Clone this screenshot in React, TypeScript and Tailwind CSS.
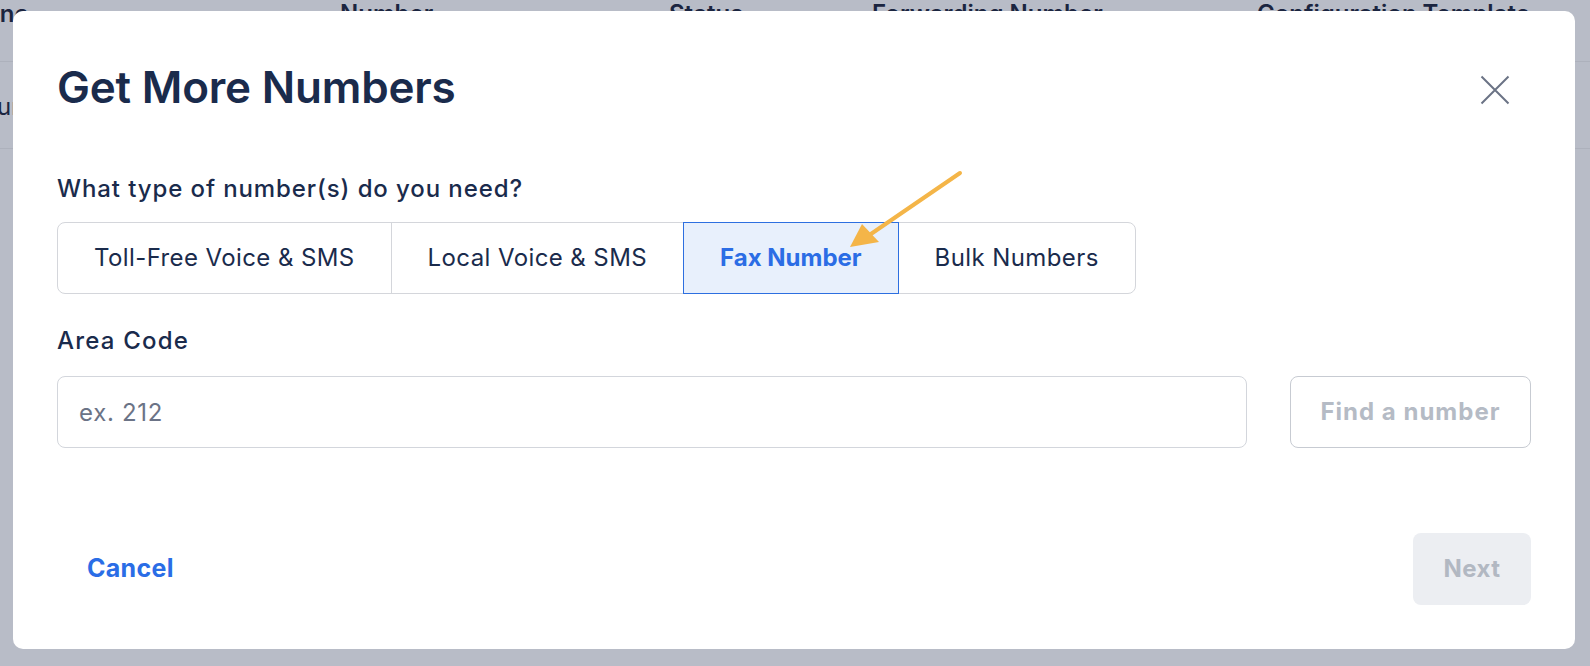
import React, { useState } from 'react';

const numberTypes = ['Toll-Free Voice & SMS', 'Local Voice & SMS', 'Fax Number', 'Bulk Numbers'];

const Backdrop: React.FC = () => (
  <div className="text-[24px] text-[#1b2540]">
    {/* table header, mostly hidden under the modal */}
    <div className="flex h-[62px] items-start border-b border-[#adb1bc] font-semibold leading-[32px]">
      <div className="-mt-[2px] w-[340px]">
        <span className="-ml-[30px] block">Sync</span>
      </div>
      <div className="-mt-[2px] w-[329px]">Number</div>
      <div className="-mt-[2px] w-[203px]">Status</div>
      <div className="-mt-[2px] w-[385px]">Forwarding Number</div>
      <div className="-mt-[2px] whitespace-nowrap">Configuration Template</div>
    </div>
    <div className="flex h-[87px] items-center border-b border-[#adb1bc]">
      <div className="-ml-[31px] pt-[4px]">Tour</div>
    </div>
  </div>
);

const Arrow: React.FC = () => (
  <svg className="pointer-events-none absolute left-0 top-0 z-20" width="1590" height="666" viewBox="0 0 1590 666">
    <line x1="960" y1="173" x2="868" y2="236" stroke="#f4b548" strokeWidth="4" strokeLinecap="round" />
    <polygon points="850,247 862,224 879,242" fill="#f4b548" />
  </svg>
);

export default function App() {
  const [active, setActive] = useState('Fax Number');
  const [areaCode, setAreaCode] = useState('');

  return (
    <div className="relative h-[666px] w-full overflow-hidden bg-[#b8bcc7] font-['Inter','Liberation_Sans',sans-serif]">
      <Backdrop />

      {/* Modal */}
      <div className="absolute left-[13px] top-[11px] flex h-[638px] w-[1562px] flex-col rounded-[10px] bg-white px-[44px] pt-[50px]">
        <div className="flex items-start justify-between">
          <h1 className="text-[44px] font-semibold leading-[52px] tracking-[-0.2px] text-[#1a2b4c]">Get More Numbers</h1>
          <button className="mt-[3px] flex h-[52px] w-[72px] items-center justify-center text-[#6b7385]">
            <svg width="30" height="30" viewBox="0 0 30 30" fill="none" stroke="currentColor" strokeWidth="2">
              <path d="M1.5 1.5 L28.5 28.5 M28.5 1.5 L1.5 28.5" />
            </svg>
          </button>
        </div>

        <p className="mt-[57px] text-[24px] font-medium leading-[32px] tracking-[0.9px] text-[#1a2b4c]">
          What type of number(s) do you need?
        </p>

        {/* Number type selector */}
        <div className="mt-[17px] flex">
          {numberTypes.map((type, i) => {
            const selected = type === active;
            return (
              <button
                key={type}
                onClick={() => setActive(type)}
                className={`h-[72px] border px-[36px] text-[24px] leading-[32px] ${i > 0 ? '-ml-px' : ''} ${
                  i === 0 ? 'rounded-l-[8px]' : ''
                } ${i === numberTypes.length - 1 ? 'rounded-r-[8px]' : ''} ${
                  selected
                    ? 'relative z-10 border-[#2d6fe0] bg-[#e8f0fc] font-bold text-[#2b6de5]'
                    : 'border-[#d4d6db] bg-white tracking-[0.4px] text-[#1a2b4c]'
                }`}
              >
                {type}
              </button>
            );
          })}
        </div>

        <label className="mt-[31px] text-[24px] font-medium leading-[32px] tracking-[1.2px] text-[#1a2b4c]">Area Code</label>

        <div className="mt-[19px] flex gap-[43px]">
          <input
            value={areaCode}
            onChange={(e) => setAreaCode(e.target.value)}
            placeholder="ex. 212"
            className="h-[72px] flex-1 rounded-[8px] border border-[#d3d6dc] px-[21px] text-[24px] tracking-[0.7px] text-[#1a2b4c] outline-none placeholder:text-[#6b7386]"
          />
          <button className="h-[72px] w-[241px] rounded-[8px] border border-[#c7cbd2] text-[24px] font-bold tracking-[1px] text-[#b5bbc5]">
            Find a number
          </button>
        </div>

        {/* Footer */}
        <div className="mt-[85px] flex items-center justify-between">
          <button className="h-[72px] px-[30px] text-[25px] font-bold tracking-[0.3px] text-[#2a6de6]">Cancel</button>
          <button className="h-[72px] w-[118px] rounded-[8px] bg-[#eceef2] text-[24px] font-bold tracking-[0.5px] text-[#b2b8c2]">
            Next
          </button>
        </div>
      </div>

      <Arrow />
    </div>
  );
}
